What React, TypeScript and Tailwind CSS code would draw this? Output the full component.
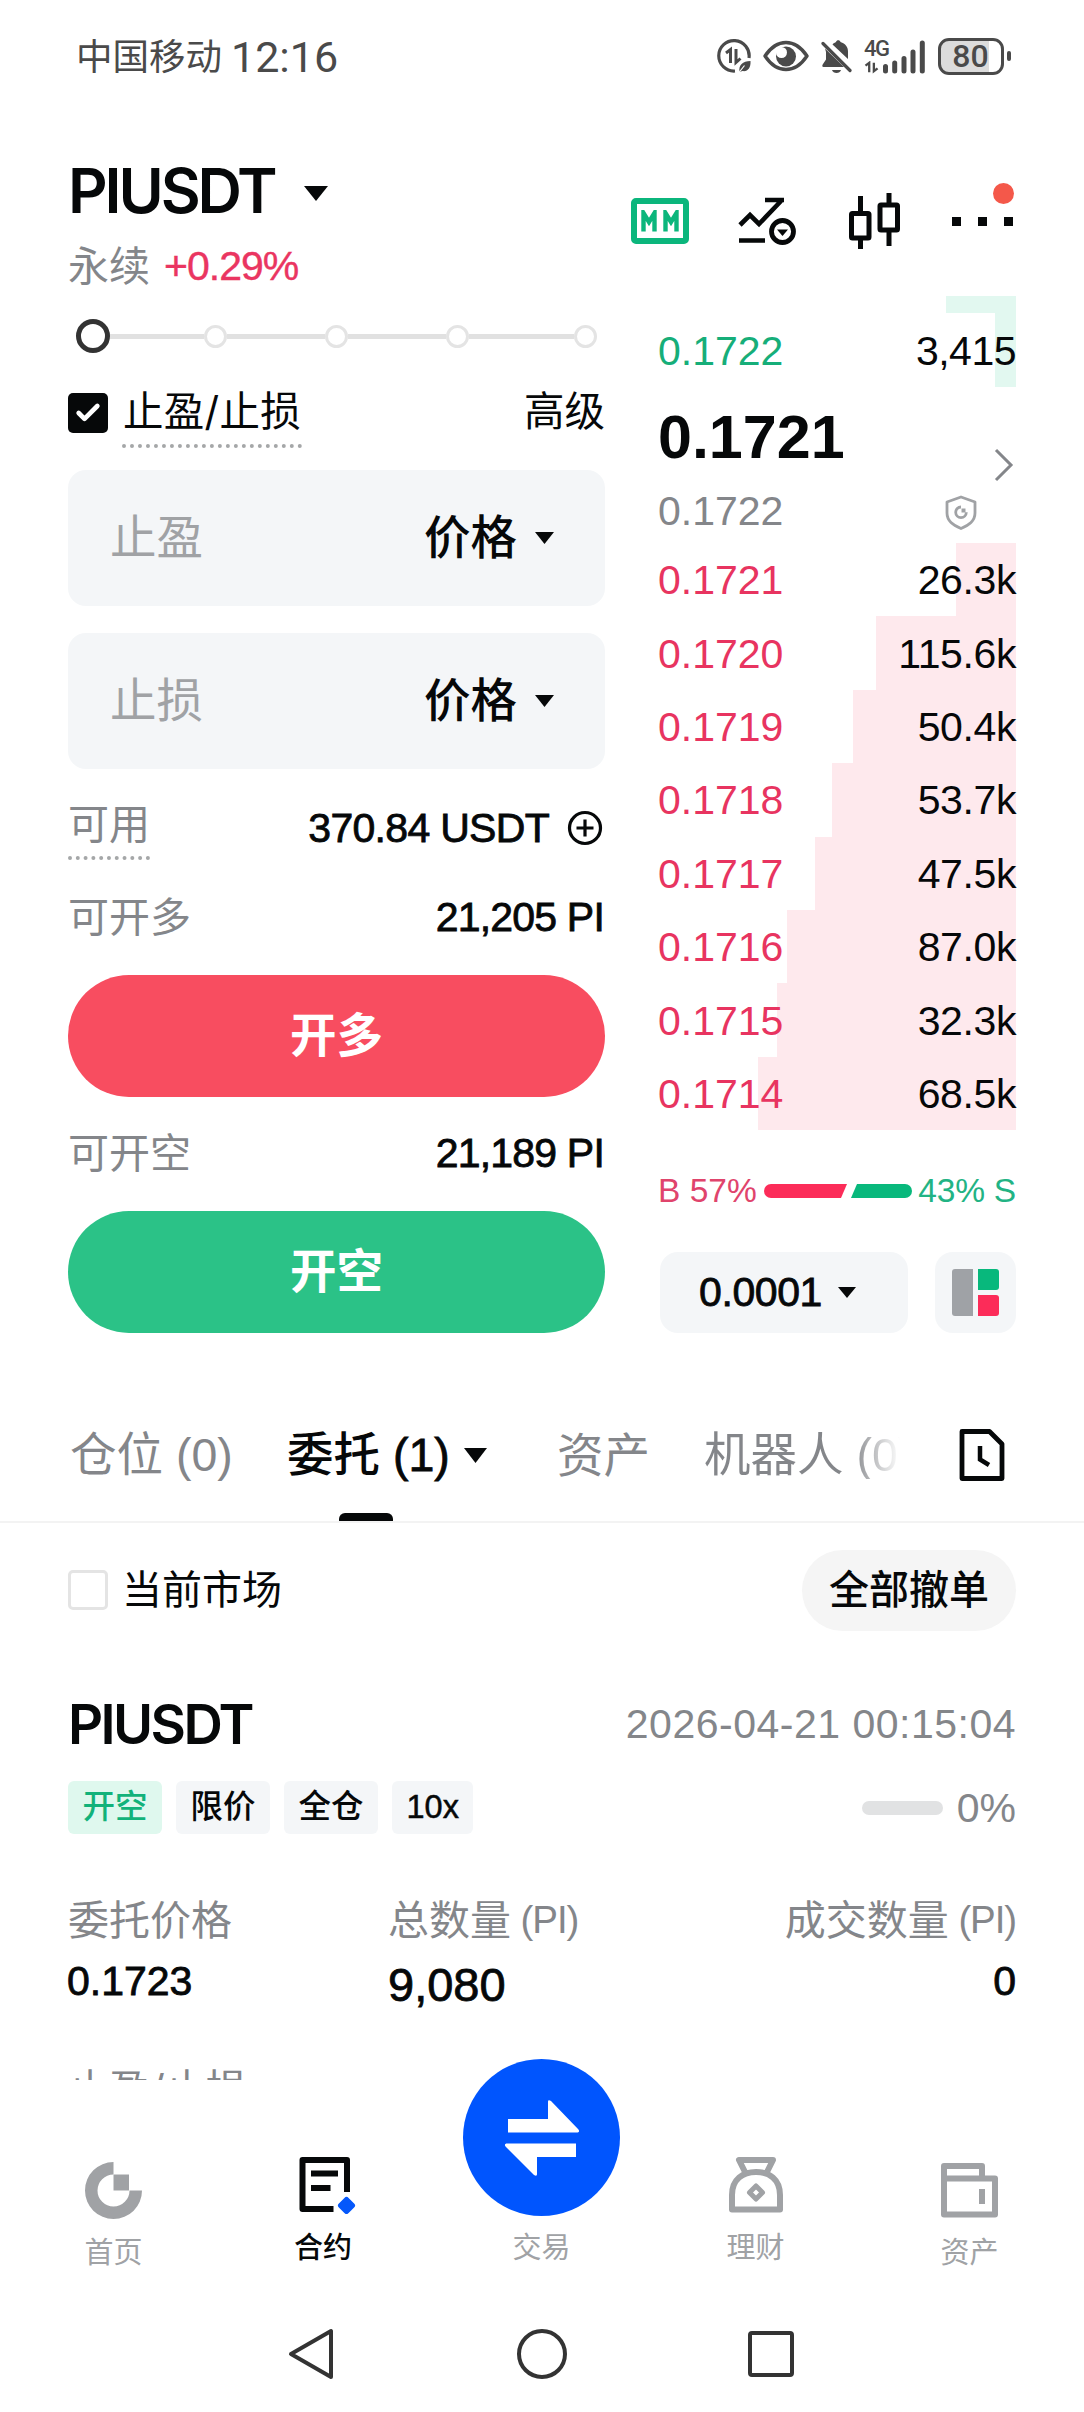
import { Check } from "lucide-react";
import type { ReactNode } from "react";

const asks = [
  { price: "0.1721", amount: "26.3k", depth: 60 },
  { price: "0.1720", amount: "115.6k", depth: 140 },
  { price: "0.1719", amount: "50.4k", depth: 163 },
  { price: "0.1718", amount: "53.7k", depth: 184 },
  { price: "0.1717", amount: "47.5k", depth: 201 },
  { price: "0.1716", amount: "87.0k", depth: 229 },
  { price: "0.1715", amount: "32.3k", depth: 239 },
  { price: "0.1714", amount: "68.5k", depth: 258 },
];

// figures: regular, and a slightly heavier cut
const num = "font-['Liberation_Sans',sans-serif]";
const numMedium = "font-['Liberation_Sans',sans-serif] [-webkit-text-stroke:0.8px]";

const Caret = ({ className }: { className: string }) => (
  <svg viewBox="0 0 20 13" preserveAspectRatio="none" className={className} fill="currentColor">
    <path d="M0 0h20L10 13z" />
  </svg>
);

const StatusBar = () => (
  <div className="flex h-[112px] items-center justify-between pr-[73px] pl-[76px] text-[#4a4a4a]">
    <div className="flex items-center pt-[2px]">
      <span className="text-[36.5px]">中国移动</span>
      <span className="ml-[9px] font-['Roboto'] text-[43px]">12:16</span>
    </div>
    <div className="flex items-center">
      {/* data saver */}
      <svg width="34" height="34" viewBox="0 0 34 34" fill="none" stroke="currentColor" strokeWidth="3.2">
        <path d="M32 19A15.2 15.2 0 1 0 18 32" />
        <path d="M9 14l4.5-3.5V24M19 10v13.500l4.500-4" strokeWidth="3" />
        <path d="M22.500 33c-1-7 3-11 11-11 .5 7-3 11-8 10z" fill="currentColor" stroke="none" />
        <path d="M21.500 34l6-7.500" stroke="#fff" strokeWidth="1.200" />
      </svg>
      {/* eye */}
      <svg className="ml-[12px]" width="46" height="32" viewBox="0 0 46 32" fill="none">
        <path d="M2 16C8 7 15 2.500 23 2.500S38 7 44 16c-6 9-13 13.500-21 13.500S8 25 2 16z" stroke="currentColor" strokeWidth="3.400" strokeLinejoin="round" />
        <circle cx="23" cy="16.500" r="10" fill="currentColor" />
        <circle cx="18.500" cy="12.500" r="5.500" fill="#fff" />
      </svg>
      {/* muted bell */}
      <svg className="ml-[12px]" width="31" height="35" viewBox="0 0 31 35" fill="currentColor">
        <path d="M4 9.500L23 28H2.500c-1.500 0-1.500-2-.5-3l3-4.500V13zM11.500 5.500C12.500 4 14 3.500 15 3c.5-2.500 4-2.500 4.500 0 5 1.500 7.500 5 7.500 9.500V20z" />
        <path d="M2 4.500l27 27" stroke="currentColor" strokeWidth="3.200" strokeLinecap="round" />
        <path d="M11 31h9c-1 4-8 4-9 0z" />
      </svg>
      <div className="ml-[12px] flex h-[36px] w-[62px] items-end">
        <div className="flex w-[18px] flex-col">
          <span className="h-[22px] w-[28px] font-['Roboto'] text-[22px] leading-[19px] font-medium tracking-[-1.5px]">4G</span>
          <svg width="16" height="13" viewBox="0 0 16 14" fill="none" stroke="currentColor" strokeWidth="2.500">
            <path d="M1 5l4-3v10M10 2v9l4-3" />
          </svg>
        </div>
        <svg width="44" height="36" viewBox="0 0 44 36" stroke="currentColor" strokeWidth="5" strokeLinecap="round">
          <path d="M3.500 28.500v4.500M12.700 25v8M22 20.500V33M31 14v19M40.300 5v28" />
        </svg>
      </div>
      <div className="ml-[12px] flex h-[37px] w-[66px] items-center rounded-[11px] border-[3px] border-[#4a4a4a] bg-[linear-gradient(90deg,#dcdcdc_80%,#fff_80%)]">
        <span className="w-full pr-[1px] text-center font-['Roboto'] text-[32px] leading-none font-medium">80</span>
      </div>
      <div className="ml-[3px] h-[10px] w-[4px] rounded-full bg-[#4a4a4a]" />
    </div>
  </div>
);

const Header = () => (
  <header className="flex h-[184px] justify-between pr-[70px] pl-[68px]">
    <div className="flex flex-col">
      <div className="flex h-[120px] items-center pt-[38px]">
        <h1 className="text-[61.5px] font-semibold tracking-[-3.1px]">PIUSDT</h1>
        <Caret className="mt-[4px] ml-[30px] h-[15px] w-[24px]" />
      </div>
      <div className="mt-[8px] flex h-[52px] items-center text-[41px]">
        <span className="text-[#84868a]">永续</span>
        <span className={`ml-[14px] tracking-[-1px] text-[#ea3561] [-webkit-text-stroke:0.4px] ${num}`}>+0.29%</span>
      </div>
    </div>
    <div className="flex h-[218px] items-center">
      <div className="flex h-[46px] w-[58px] items-center justify-center rounded-[5px] border-[6px] border-[#0bb67c] text-[#0bb67c]">
        <svg width="42" height="22" viewBox="0 0 42 22" fill="none" stroke="currentColor" strokeWidth="4.400">
          <path d="M4.500 21.500V3l5.500 9 5.500-9v18.500M26.500 21.500V3l5.500 9 5.500-9v18.500" />
        </svg>
      </div>
      <svg className="ml-[49px]" width="58" height="48" viewBox="0 0 58 48" fill="none" stroke="#060809" strokeWidth="4.600">
        <path d="M2 28l10-10 9 9L43 4M27 3h19M1 43.500h26" />
        <circle cx="44.500" cy="34.500" r="11" strokeWidth="4.800" />
        <path d="M39 32.500h11l-5.500 6.500z" fill="#060809" stroke="none" />
      </svg>
      <svg className="ml-[53px]" width="52" height="58" viewBox="0 0 52 58" fill="none" stroke="#060809" strokeWidth="5">
        <path d="M11.500 4v15M11.500 46v11M40 1v11M40 38v16" />
        <rect x="2.500" y="21.500" width="17.500" height="24.500" rx="1" />
        <rect x="31" y="13" width="17.500" height="25" rx="1" />
      </svg>
      <div className="relative ml-[51px] flex w-[62px] gap-[17px]">
        <i className="size-[9px] bg-[#060809]" />
        <i className="size-[9px] bg-[#060809]" />
        <i className="size-[9px] bg-[#060809]" />
        <i className="absolute -top-[34px] right-0 size-[21px] rounded-full bg-[#f4584a]" />
      </div>
    </div>
  </header>
);

const LeverageSlider = () => (
  <div className="flex h-[80px] items-center pr-[8px] pl-[8px]">
    <i className="size-[34px] rounded-full border-[5px] border-[#333]" />
    <i className="h-[5px] w-[94px] bg-[#e1e1e1]" />
    <i className="size-[23px] rounded-full border-[3px] border-[#e4e4e4]" />
    <i className="h-[5px] flex-1 bg-[#e1e1e1]" />
    <i className="size-[23px] rounded-full border-[3px] border-[#e4e4e4]" />
    <i className="h-[5px] flex-1 bg-[#e1e1e1]" />
    <i className="size-[23px] rounded-full border-[3px] border-[#e4e4e4]" />
    <i className="h-[5px] w-[105px] bg-[#e1e1e1]" />
    <i className="size-[23px] rounded-full border-[3px] border-[#e4e4e4]" />
  </div>
);

const TriggerInput = ({ label }: { label: string }) => (
  <div className="flex h-[136px] items-center rounded-[18px] bg-[#f4f6f8] pr-[51px] pb-[2px] pl-[42px] text-[46.5px]">
    <span className="text-[#a0a2a5]">{label}</span>
    <span className="ml-auto font-medium">价格</span>
    <Caret className="mt-[2px] ml-[18px] h-[12px] w-[19px]" />
  </div>
);

const AmountRow = ({ label, value }: { label: string; value: string }) => (
  <div className="flex h-[50px] items-center justify-between pr-[1px] pb-[1px] text-[41px]">
    <span className="text-[#84868a]">{label}</span>
    <span className={`tracking-[-0.8px] ${numMedium}`}>{value}</span>
  </div>
);

const OrderForm = () => (
  <div className="w-[537px]">
    <LeverageSlider />
    <div className="flex h-[74px] items-start text-[40.5px]">
      <span className="mt-[17px] flex size-[40px] items-center justify-center rounded-[5px] bg-[#060809]">
        <Check size={28} strokeWidth={4} color="#fff" />
      </span>
      <span className="ml-[14px] flex h-[72px] items-center border-b-4 border-dotted border-[#a5a7a8] px-[1px] pt-[5px] tracking-[0.3px]">止盈/止损</span>
      <span className="ml-auto flex h-[73px] items-center">高级</span>
    </div>
    <div className="mt-[20px] flex flex-col gap-[27px]">
      <TriggerInput label="止盈" />
      <TriggerInput label="止损" />
    </div>
    <div className="mt-[28px] flex h-[64px] text-[41px]">
      <span className="flex h-[63px] items-center border-b-4 border-dotted border-[#a5a7a8] pb-[5px] text-[#84868a]">可用</span>
      <span className={`ml-auto flex h-[62px] items-center tracking-[-0.7px] ${numMedium}`}>370.84 USDT</span>
      <svg className="mt-[13px] mr-[2px] ml-[18px]" width="36" height="36" viewBox="0 0 36 36" fill="none" stroke="#060809" strokeWidth="3.200">
        <circle cx="18" cy="18" r="15.500" />
        <path d="M18 9.500v17M9.500 18h17" />
      </svg>
    </div>
    <div className="mt-[32px]">
      <AmountRow label="可开多" value="21,205 PI" />
    </div>
    <button className="mt-[32px] block h-[122px] w-full rounded-full bg-[#f84d60] pb-[2px] text-[46.5px] font-bold text-white">开多</button>
    <div className="mt-[32px]">
      <AmountRow label="可开空" value="21,189 PI" />
    </div>
    <button className="mt-[32px] block h-[122px] w-full rounded-full bg-[#2bc287] pb-[2px] text-[46.5px] font-bold text-white">开空</button>
  </div>
);

const OrderBook = () => (
  <div className={`w-[356px] text-[41px] ${num}`}>
    <div className="ml-auto h-[17px] w-[70px] bg-[#e2f8f0]" />
    <div className="flex h-[74px] items-center justify-between bg-[linear-gradient(#e2f8f0,#e2f8f0)] bg-[length:21px_100%] bg-right bg-no-repeat pt-[2px]">
      <span className="-ml-[2px] text-[#16ae79]">0.1722</span>
      <span className="tracking-[-0.5px]">3,415</span>
    </div>
    <div className="flex h-[156px] justify-between">
      <div className="-ml-[2px]">
        <div className="flex h-[101px] items-center text-[61px] font-bold">0.1721</div>
        <div className="flex h-[46px] items-center text-[#84868a]">0.1722</div>
      </div>
      <div className="flex w-[72px] flex-col pt-[61px]">
        <svg className="mr-[1px] ml-auto" width="22" height="34" viewBox="0 0 22 34" fill="none" stroke="#84868a" strokeWidth="3">
          <path d="M3 2l15 15L3 32" />
        </svg>
        <svg className="mt-[13px]" width="34" height="35" viewBox="0 0 34 35" fill="none" stroke="#a0a2a5" strokeWidth="2.800">
          <path d="M17 2l14 5v11c0 8-6 12-14 15.500C9 30 3 26 3 18V7z" strokeLinejoin="round" />
          <path d="M17 12a5.300 5.300 0 1 0 5.300 5.300" />
          <path d="M17.500 13.500h4v4h-4z" fill="#a0a2a5" stroke="none" />
        </svg>
      </div>
    </div>
    {asks.map((row) => (
      <div key={row.price} className="relative flex h-[73.4px] items-center justify-between pt-[2px]">
        <i className="absolute inset-y-0 right-0 bg-[#fee9ed]" style={{ width: row.depth }} />
        <span className="relative -ml-[2px] text-[#e83460]">{row.price}</span>
        <span className="relative tracking-[-0.4px]">{row.amount}</span>
      </div>
    ))}
    <div className="flex h-[122px] items-center justify-between text-[33.5px]">
      <span className="-ml-[2px] text-[#e0446c]">B 57%</span>
      <svg width="148" height="14" viewBox="0 0 148 14">
        <path d="M7 0h76l-6 14H7A7 7 0 0 1 7 0z" fill="#fc2c59" />
        <path d="M93 0h48a7 7 0 0 1 0 14H87z" fill="#08b87c" />
      </svg>
      <span className="tracking-[-0.200px] text-[#22b384]">43% S</span>
    </div>
    <div className="flex justify-between">
      <div className="flex h-[81px] w-[248px] items-center rounded-[18px] bg-[#f4f6f8] pl-[39px]">
        <span className="tracking-[-0.4px] [-webkit-text-stroke:0.8px]">0.0001</span>
        <Caret className="ml-[16px] h-[11px] w-[18px]" />
      </div>
      <div className="flex size-[81px] items-center justify-center rounded-[18px] bg-[#f4f6f8]">
        <svg width="47" height="47" viewBox="0 0 47 47">
          <path d="M3 0h18v47H3a3 3 0 0 1-3-3V3a3 3 0 0 1 3-3z" fill="#9fa2a6" />
          <path d="M26 0h18a3 3 0 0 1 3 3v15a3 3 0 0 1-3 3H26z" fill="#08b87c" />
          <path d="M26 26h18a3 3 0 0 1 3 3v15a3 3 0 0 1-3 3H26z" fill="#fc2c59" />
        </svg>
      </div>
    </div>
  </div>
);

const Tabs = () => (
  <div className="flex h-[190px] items-center border-b-2 border-[#f3f3f3] pt-[56px] pl-[70px] text-[46.5px] text-[#84868a]">
    <span className="w-[217px] whitespace-pre">仓位<span className={num}> (0)</span></span>
    <div className="relative flex h-full w-[270px] items-center font-medium text-[#060809]">
      <span className="whitespace-pre">委托<span className={numMedium}> (1)</span></span>
      <Caret className="ml-[14px] h-[15px] w-[23px]" />
      <i className="absolute bottom-0 left-[52px] h-[8px] w-[54px] rounded-t-[6px] bg-[#060809]" />
    </div>
    <span className="w-[147px]">资产</span>
    <span className="w-[196px] overflow-hidden bg-linear-to-r from-[#84868a] from-75% to-transparent bg-clip-text whitespace-pre text-transparent">机器人<span className={num}> (0)</span></span>
    <svg className="ml-[58px]" width="48" height="54" viewBox="0 0 48 54" fill="none" stroke="#060809" strokeWidth="4.800">
      <path d="M4 3.500h27.500L44 16v34.500H4z" strokeLinejoin="round" />
      <path d="M22 18v13.500l9 5.500" strokeWidth="4.500" />
    </svg>
  </div>
);

const Tag = ({ children, className = "bg-[#f4f6f8]" }: { children: ReactNode; className?: string }) => (
  <span className={`flex h-[53px] items-center rounded-[6px] px-[14.500px] text-[32.500px] font-medium ${className}`}>{children}</span>
);

const Orders = () => (
  <section className="px-[68px]">
    <div className="flex h-[134px] items-center text-[40px]">
      <span className="size-[40px] rounded-[5px] border-[3px] border-[#e4e4e4]" />
      <span className="ml-[14px]">当前市场</span>
      <button className="ml-auto h-[81px] w-[214px] rounded-full bg-[#f5f5f5] font-medium">全部撤单</button>
    </div>
    <div className="flex h-[124px] items-center justify-between pt-[10px]">
      <h2 className="text-[54.500px] font-semibold tracking-[-2.600px]">PIUSDT</h2>
      <span className={`text-[41px] tracking-[0.500px] text-[#84868a] ${num}`}>2026-04-21 00:15:04</span>
    </div>
    <div className="flex h-[53px] items-center gap-[14px]">
      <Tag className="bg-[#dff8ee] text-[#12b27a]">开空</Tag>
      <Tag>限价</Tag>
      <Tag>全仓</Tag>
      <Tag>
        <span className={`[-webkit-text-stroke:0.5px] ${num}`}>10x</span>
      </Tag>
      <i className="ml-auto h-[14px] w-[81px] rounded-full bg-[#e1e2e3]" />
      <span className={`pt-[2px] text-[41px] text-[#84868a] ${num}`}>0%</span>
    </div>
    <div className="mt-[61px] flex text-[41px]">
      <div className="w-[320px]">
        <div className="flex h-[50px] items-center text-[#84868a]">委托价格</div>
        <div className={`mt-[11px] -ml-[1px] flex h-[50px] items-center ${numMedium}`}>0.1723</div>
      </div>
      <div className="flex-1">
        <div className="flex h-[50px] items-center whitespace-pre text-[#84868a]">总数量<span className={`text-[38.5px] tracking-[-1.1px] ${num}`}> (PI)</span></div>
        <div className={`mt-[9px] flex h-[60px] items-center text-[47px] ${numMedium}`}>9,080</div>
      </div>
      <div>
        <div className="flex h-[50px] items-center whitespace-pre text-[#84868a]">成交数量<span className={`text-[38.5px] tracking-[-1.1px] ${num}`}> (PI)</span></div>
        <div className={`mt-[11px] flex h-[50px] items-center justify-end ${numMedium}`}>0</div>
      </div>
    </div>
    {/* next row is cut off by the bottom nav */}
    <div className="mt-[49px] h-[17px] overflow-hidden">
      <div className="flex h-[52px] items-center text-[41px] text-[#84868a]">止盈/止损</div>
    </div>
  </section>
);

const NavItem = ({ label, className = "text-[#a0a2a5]", children }: { label: string; className?: string; children: ReactNode }) => (
  <div className={`flex w-[214px] flex-col items-center text-[29px] leading-none ${className}`}>
    {children}
    <span className="flex h-[40px] items-center">{label}</span>
  </div>
);

const BottomNav = () => (
  <nav className="-mt-[21px] flex h-[231px] justify-center pr-[1px]">
    <NavItem label="首页" className="pt-[103px] text-[#a0a2a5]">
      <svg className="mb-[13px]" width="57" height="57" viewBox="0 0 57 57" fill="#a0a2a5">
        <path d="M28.500 0v12.500a16 16 0 1 0 16 16H57A28.500 28.500 0 1 1 28.500 0z" />
        <path d="M28.500 12.500h15.500v16H28.500z" />
      </svg>
    </NavItem>
    <NavItem label="合约" className="pt-[98px] pr-[9px] font-medium text-[#060809]">
      <svg className="mb-[13px] ml-[8px]" width="57" height="57" viewBox="0 0 57 57" fill="none" stroke="#060809" strokeWidth="6">
        <path d="M34.500 52H3.500V3H48v32" strokeLinejoin="round" />
        <path d="M12 16.500h27M12 31h19.500" />
        <path d="M47.500 43l5.500 5.500-5.500 5.500-5.500-5.500z" fill="#0558fb" stroke="#0558fb" strokeWidth="6" strokeLinejoin="round" />
      </svg>
    </NavItem>
    <NavItem label="交易">
      <div className="mb-[11px] flex size-[157px] items-center justify-center rounded-full bg-[#0055fe]">
        <svg width="76" height="78" viewBox="0 0 76 78" fill="#fff">
          <path d="M4 20h40V3c0-2 1-2 3-1l27 28c2 2 1 3.500-1 3.500H4z" />
          <path d="M72 58H33v17c0 2-1 2-3 1L2 48c-2-2-1-3.500 1-3.500h69z" />
        </svg>
      </div>
    </NavItem>
    <NavItem label="理财" className="pt-[98px] text-[#a0a2a5]">
      <svg className="mb-[14px]" width="54" height="56" viewBox="0 0 54 56" fill="none" stroke="#a0a2a5" strokeWidth="6" strokeLinejoin="round">
        <path d="M16 15L10 3h34l-6 12M3 52.500V38C3 22 14 15 27 15s24 7 24 23v14.500z" />
        <path d="M27 29l6.500 6.500L27 42l-6.500-6.500z" strokeWidth="5" />
      </svg>
    </NavItem>
    <NavItem label="资产" className="pt-[104px] text-[#a0a2a5]">
      <svg className="mb-[14px]" width="57" height="55" viewBox="0 0 57 55" fill="none" stroke="#a0a2a5" strokeWidth="6" strokeLinejoin="round">
        <path d="M3 15.500h51v36H3zM3 15.500V3h38v12" />
        <path d="M41 26v15" />
      </svg>
    </NavItem>
  </nav>
);

const SystemNav = () => (
  <div className="flex h-[122px] items-center pt-[5px] pl-[287px]">
    <svg width="48" height="52" viewBox="0 0 48 52" fill="none" stroke="#333" strokeWidth="4" strokeLinejoin="round">
      <path d="M44 3v46L4 26z" />
    </svg>
    <i className="ml-[182px] size-[50px] rounded-full border-4 border-[#333]" />
    <i className="ml-[181px] size-[46px] rounded-[4px] border-4 border-[#333]" />
  </div>
);

const App = () => {
  return (
    <div className="h-[2412px] w-[1084px] overflow-hidden bg-white font-['Inter','Noto_Sans_CJK_SC',sans-serif] leading-none text-[#060809]">
      <StatusBar />
      <Header />
      <main className="flex justify-between px-[68px]">
        <OrderForm />
        <OrderBook />
      </main>
      <Tabs />
      <Orders />
      <BottomNav />
      <SystemNav />
    </div>
  );
};

export default App;
